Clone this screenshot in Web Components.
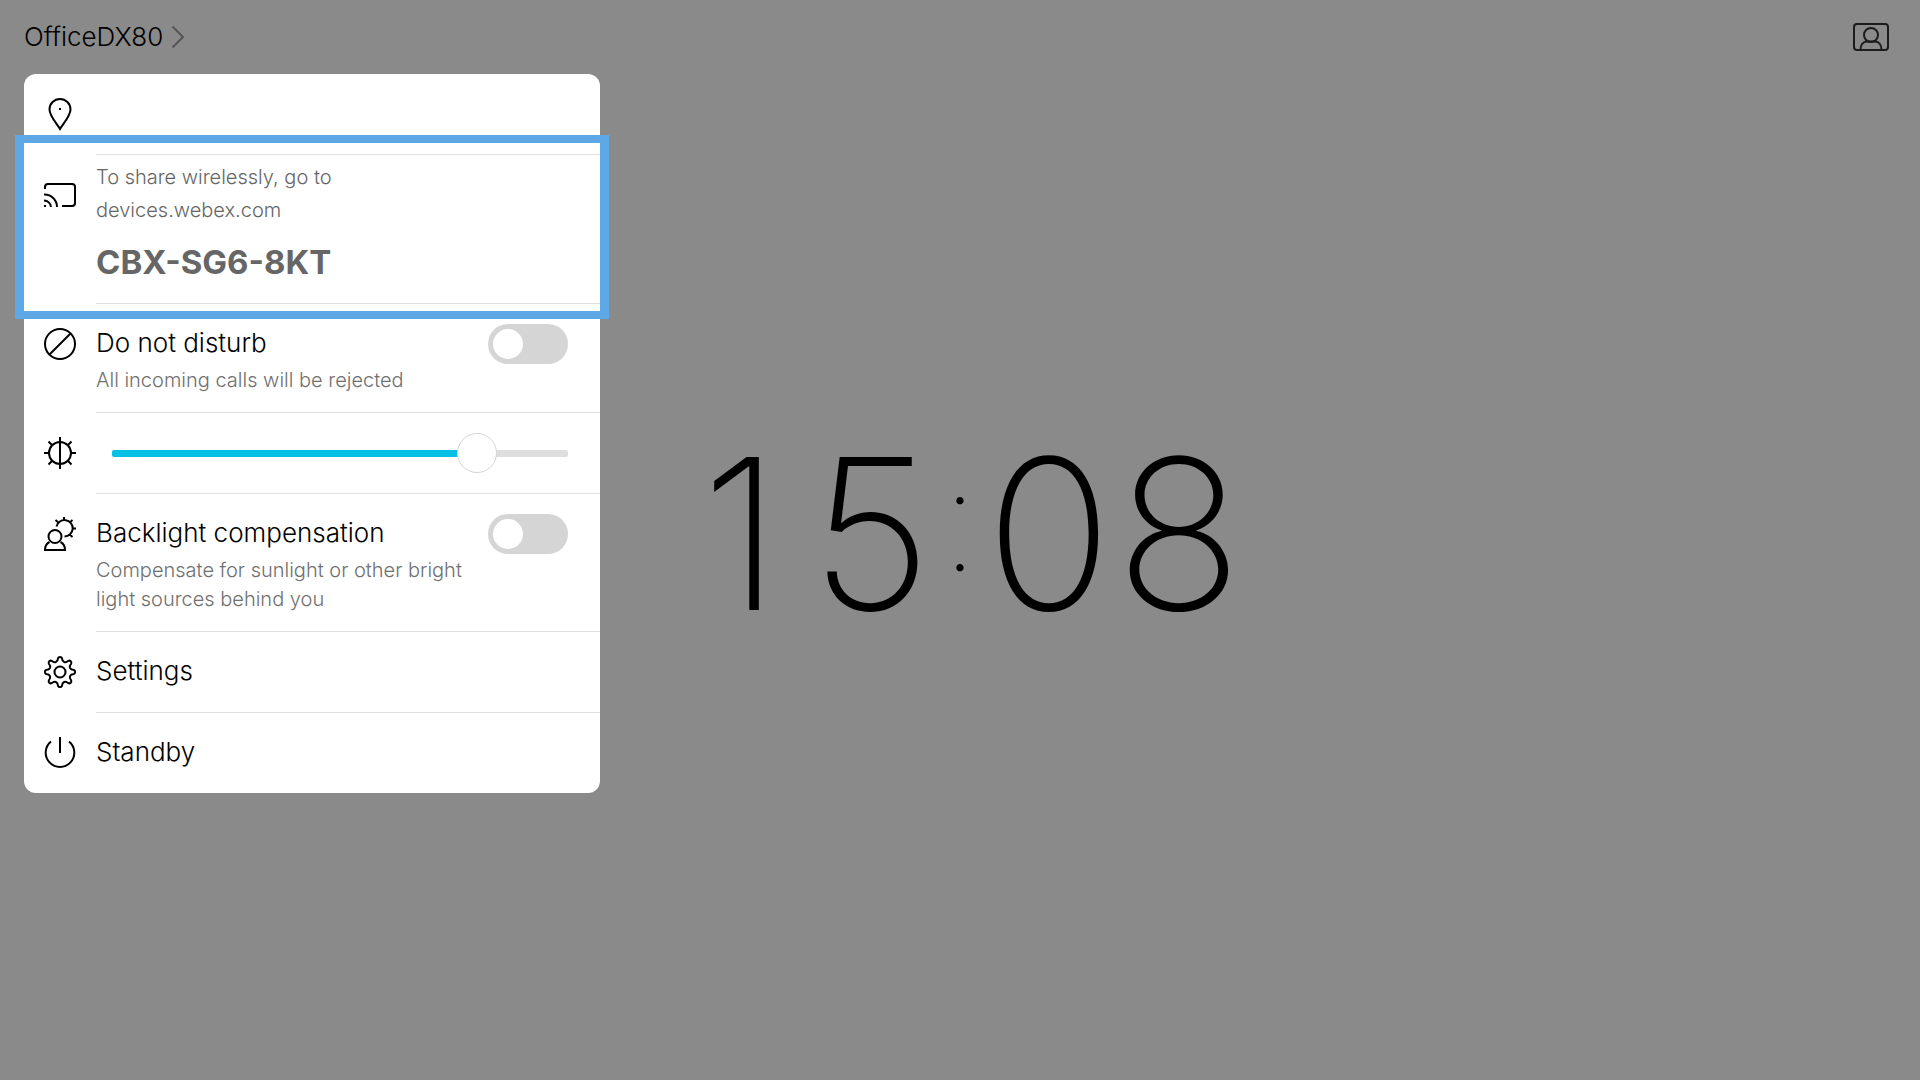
<!DOCTYPE html>
<html lang="en">
<head>
<meta charset="utf-8">
<meta name="viewport" content="width=device-width, initial-scale=1">
<title>OfficeDX80</title>
<style>
    body {
        margin: 0;
        background: #8a8a8a;
        color: #000;
        font-family: Inter, "Liberation Sans", sans-serif;
        font-weight: 300;
    }
</style>
</head>
<body>
<room-screen>
    <top-bar slot="bar">OfficeDX80</top-bar>
    <control-panel slot="panel">
        <panel-row icon="pin"></panel-row>
        <share-info icon="cast" code="CBX-SG6-8KT">
            <span>To share wirelessly, go to</span>
            <span>devices.webex.com</span>
        </share-info>
        <toggle-row icon="dnd" label="Do not disturb">All incoming calls will be rejected</toggle-row>
        <panel-row icon="brightness"><level-slider value="83" label="Brightness"></level-slider></panel-row>
        <toggle-row icon="backlight" label="Backlight compensation">Compensate for sunlight or other bright light sources behind you</toggle-row>
        <action-row icon="settings">Settings</action-row>
        <action-row icon="standby">Standby</action-row>
    </control-panel>
    <wall-clock time="15:08"></wall-clock>
</room-screen>

<script>
// Eight-tooth gear outline centred on 16,16
function gearPath() {
    const at = (r, deg) => {
        const a = deg * Math.PI / 180;
        return (16 + r * Math.cos(a)).toFixed(2) + ' ' + (16 + r * Math.sin(a)).toFixed(2);
    };
    let d = 'M' + at(10.8, -22.5);
    for (let k = 0; k < 8; k++) {
        const a = k * 45;
        d += `C${at(11, a - 13)} ${at(12, a - 10)} ${at(14, a - 8)}`;
        d += `C${at(15.6, a - 5)} ${at(15.6, a + 5)} ${at(14, a + 8)}`;
        d += `C${at(12, a + 10)} ${at(11, a + 13)} ${at(10.8, a + 22.5)}`;
    }
    return d + 'Z';
}

const icons = {
    pin: '<path d="M16 31C13 26 5.500 18 5.500 11.500a10.500 10.500 0 0 1 21 0C26.500 18 19 26 16 31Z"/><path d="M15 11h2" />',
    cast: '<path d="M1 10V8a3 3 0 0 1 3-3h24a3 3 0 0 1 3 3v16a3 3 0 0 1-3 3H18M0 15.500a12.500 12.500 0 0 1 13 12.500M0 21.500a7 7 0 0 1 7 6.500"/><path d="M0 27h2"/>',
    dnd: '<circle cx="16" cy="16" r="15"/><path d="M5.500 26.500 26.500 5.500"/>',
    brightness: '<circle cx="16" cy="16" r="11"/><path d="M16 0v32M0 16h5M27 16h5M4.500 4.500 8.200 8.200M27.500 4.500 23.800 8.200M4.500 27.500 8.200 23.800M27.500 27.500 23.800 23.800"/>',
    backlight: '<circle cx="11" cy="18.500" r="6.500"/><path d="M5.500 24C2.500 25.500 1 28 1 32h20c0-4-1.500-6.500-4.500-8M12.500 8.500A8.200 8.200 0 1 1 20.500 18.500M20 -1v3.500M28.500 10.500H32M11.500 2l2.800 2.500M28.500 2l-2.800 2.500M28.500 19l-2.800-2.500"/>',
    settings: `<path d="${gearPath()}"/><circle cx="16" cy="16" r="5.500"/>`,
    standby: '<path d="M16 0v16M7 4.500a14.300 14.300 0 1 0 18 0"/>'
};

const icon = name => `<svg class="icon" viewBox="0 0 32 32" aria-hidden="true">${icons[name]}</svg>`;

// Shared by every row in the panel
const rowStyle = `
    :host {
        display: block;
        padding-left: 20px;
    }
    .row {
        display: grid;
        grid-template-columns: 32px minmax(0, 1fr);
        column-gap: 20px;
    }
    .icon {
        width: 32px;
        height: 32px;
        margin-top: 24px;
        overflow: visible;
        fill: none;
        stroke: #000;
        stroke-width: 2;
    }
    .body {
        box-sizing: border-box;
        min-height: 80px;
        border-bottom: 1px solid #dedede;
    }
    :host(:not(:last-child)) .body {
        min-height: 81px;
    }
    :host(:last-child) .body {
        border-bottom: 0;
    }
`;

class RoomScreen extends HTMLElement {
    connectedCallback() {
        this.attachShadow({ mode: 'open' });
        this.shadowRoot.innerHTML = `
            <style>
                :host {
                    display: grid;
                    min-height: 100vh;
                }
                .overlay, main {
                    grid-area: 1 / 1;
                }
                main {
                    display: grid;
                    place-items: center;
                    padding-bottom: 12px;
                }
                .overlay {
                    z-index: 1;
                }
            </style>
            <main><slot></slot></main>
            <div class="overlay">
                <slot name="bar"></slot>
                <slot name="panel"></slot>
            </div>
        `;
    }
}

class TopBar extends HTMLElement {
    connectedCallback() {
        this.attachShadow({ mode: 'open' });
        this.shadowRoot.innerHTML = `
            <style>
                :host {
                    display: block;
                }
                header {
                    display: flex;
                    align-items: center;
                    justify-content: space-between;
                    height: 74px;
                    padding: 0 31px 0 24px;
                }
                button {
                    display: flex;
                    align-items: center;
                    gap: 8px;
                    padding: 0;
                    border: 0;
                    background: none;
                    color: inherit;
                    font: inherit;
                    font-size: 26px;
                    line-height: 36px;
                }
                svg {
                    display: block;
                    fill: none;
                    stroke: #1c1c1c;
                    stroke-width: 2;
                }
                .chevron {
                    stroke: #555;
                }
            </style>
            <header>
                <button type="button">
                    <span><slot></slot></span>
                    <svg class="chevron" width="14" height="24" viewBox="0 0 14 24" aria-hidden="true"><path d="M1.500 1.500 12 12 1.500 22.500"/></svg>
                </button>
                <button type="button" aria-label="Self view">
                    <svg width="36" height="28" viewBox="0 0 36 28"><rect x="1" y="1" width="34" height="26" rx="3"/><circle cx="18" cy="12" r="7"/><path d="M7.500 27c0-5 2.500-8.500 6.500-8.500h8c4 0 6.500 3.500 6.500 8.500"/></svg>
                </button>
            </header>
        `;
    }
}

class ControlPanel extends HTMLElement {
    connectedCallback() {
        this.attachShadow({ mode: 'open' });
        this.shadowRoot.innerHTML = `
            <style>
                :host {
                    display: block;
                    width: 576px;
                    max-width: calc(100% - 48px);
                    margin-left: 24px;
                    border-radius: 12px;
                    background: #fff;
                }
            </style>
            <slot></slot>
        `;
    }
}

class PanelRow extends HTMLElement {
    connectedCallback() {
        this.attachShadow({ mode: 'open' });
        this.shadowRoot.innerHTML = `
            <style>
                ${rowStyle}
                .body {
                    display: flex;
                    align-items: center;
                    padding: 0 32px 0 16px;
                }
            </style>
            <div class="row">
                ${icon(this.getAttribute('icon'))}
                <div class="body"><slot></slot></div>
            </div>
        `;
    }
}

class ShareInfo extends HTMLElement {
    connectedCallback() {
        this.attachShadow({ mode: 'open' });
        this.shadowRoot.innerHTML = `
            <style>
                ${rowStyle}
                :host {
                    position: relative;
                }
                .body {
                    padding: 6px 0 21px;
                    color: #666;
                }
                ::slotted(span) {
                    display: block;
                    font-size: 20px;
                    line-height: 33px;
                }
                strong {
                    display: block;
                    margin-top: 15px;
                    font-size: 33px;
                    font-weight: 700;
                    line-height: 40px;
                }
                .highlight {
                    position: absolute;
                    inset: -20px -9px -15px;
                    border: solid #5fa8e8;
                    border-width: 8px 9px;
                    pointer-events: none;
                }
            </style>
            <div class="row">
                ${icon(this.getAttribute('icon'))}
                <div class="body">
                    <slot></slot>
                    <strong>${this.getAttribute('code')}</strong>
                </div>
            </div>
            <div class="highlight"></div>
        `;
    }
}

class ToggleRow extends HTMLElement {
    connectedCallback() {
        this.attachShadow({ mode: 'open' });
        this.shadowRoot.innerHTML = `
            <style>
                ${rowStyle}
                .body {
                    display: grid;
                    grid-template-columns: minmax(0, 1fr) 80px;
                    column-gap: 20px;
                    align-items: start;
                    padding: 20px 32px 17px 0;
                }
                .text {
                    padding-top: 1px;
                }
                label {
                    font-size: 26px;
                    line-height: 36px;
                }
                p {
                    margin: 5px 0 0;
                    color: #707070;
                    font-size: 20px;
                    line-height: 29px;
                }
                input {
                    appearance: none;
                    display: flex;
                    box-sizing: border-box;
                    width: 80px;
                    height: 40px;
                    margin: 0;
                    padding: 5px;
                    border-radius: 20px;
                    background: #d5d5d5;
                }
                input::before {
                    content: '';
                    width: 30px;
                    height: 30px;
                    border-radius: 50%;
                    background: #fff;
                }
                input:checked {
                    justify-content: flex-end;
                    background: #07c1e4;
                }
            </style>
            <div class="row">
                ${icon(this.getAttribute('icon'))}
                <div class="body">
                    <div class="text">
                        <label for="toggle">${this.getAttribute('label')}</label>
                        <p id="hint"><slot></slot></p>
                    </div>
                    <input type="checkbox" role="switch" id="toggle" aria-describedby="hint">
                </div>
            </div>
        `;
    }
}

class LevelSlider extends HTMLElement {
    connectedCallback() {
        const value = this.getAttribute('value');
        this.attachShadow({ mode: 'open' });
        this.shadowRoot.innerHTML = `
            <style>
                :host {
                    display: block;
                    flex: 1;
                }
                input {
                    appearance: none;
                    display: block;
                    width: 100%;
                    height: 40px;
                    margin: 0;
                    background: none;
                }
                input::-webkit-slider-runnable-track {
                    height: 7px;
                    border-radius: 2px;
                    background: linear-gradient(to right, #07c1e4 var(--level), #dedede var(--level));
                }
                input::-webkit-slider-thumb {
                    appearance: none;
                    box-sizing: border-box;
                    width: 40px;
                    height: 40px;
                    margin-top: -17px;
                    border: 1px solid #d5d5d5;
                    border-radius: 50%;
                    background: #fff;
                }
            </style>
            <input type="range" min="0" max="100" value="${value}" aria-label="${this.getAttribute('label')}">
        `;
        const input = this.shadowRoot.querySelector('input');
        const paint = () => input.style.setProperty('--level', input.value + '%');
        input.addEventListener('input', paint);
        paint();
    }
}

class ActionRow extends HTMLElement {
    connectedCallback() {
        this.attachShadow({ mode: 'open' });
        this.shadowRoot.innerHTML = `
            <style>
                ${rowStyle}
                button {
                    width: 100%;
                    padding: 0;
                    border: 0;
                    background: none;
                    color: inherit;
                    font: inherit;
                    text-align: left;
                }
                .body {
                    padding: 21px 0;
                    font-size: 26px;
                    line-height: 36px;
                }
            </style>
            <button type="button" class="row">
                ${icon(this.getAttribute('icon'))}
                <span class="body"><slot></slot></span>
            </button>
        `;
    }
}

// Every digit sits in a cell of its own, so the colon stays in the middle
class WallClock extends HTMLElement {
    connectedCallback() {
        const cells = [...this.getAttribute('time')]
            .map(c => `<span class="${c === ':' ? 'colon' : 'digit'}">${c}</span>`)
            .join('');
        this.attachShadow({ mode: 'open' });
        this.shadowRoot.innerHTML = `
            <style>
                :host {
                    display: block;
                    font-size: 210px;
                    font-weight: 200;
                    line-height: 260px;
                }
                time {
                    display: flex;
                    align-items: center;
                    text-align: center;
                }
                .digit {
                    width: 130px;
                }
                .colon {
                    width: 48px;
                    font-size: 142px;
                    font-weight: 100;
                    font-feature-settings: "case";
                }
            </style>
            <time>${cells}</time>
        `;
    }
}

customElements.define('room-screen', RoomScreen);
customElements.define('top-bar', TopBar);
customElements.define('control-panel', ControlPanel);
customElements.define('panel-row', PanelRow);
customElements.define('share-info', ShareInfo);
customElements.define('toggle-row', ToggleRow);
customElements.define('level-slider', LevelSlider);
customElements.define('action-row', ActionRow);
customElements.define('wall-clock', WallClock);
</script>
</body>
</html>
